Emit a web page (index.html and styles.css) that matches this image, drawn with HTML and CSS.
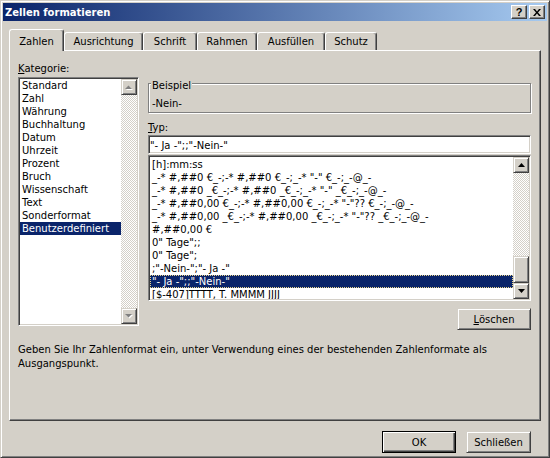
FILE: index.html
```html
<!DOCTYPE html>
<html lang="de">
<head>
    <meta charset="UTF-8">
    <title>Zellen formatieren</title>
    <link rel="stylesheet" href="styles.css">
</head>
<body>
    <div class="window">
        <div class="titlebar">
            <span class="title">Zellen formatieren</span>
            <div class="caption">
                <span class="cap-btn help">?</span>
                <span class="cap-btn">
                    <svg width="8" height="7" viewBox="0 0 8 7"><path d="M0 0h2l2 2.5L6 0h2L5 3.5 8 7H6L4 4.5 2 7H0l3-3.5z" fill="#000"/></svg>
                </span>
            </div>
        </div>

        <div class="tabs">
            <div class="tab active w-zahlen">Zahlen</div>
            <div class="tab w-ausr">Ausrichtung</div>
            <div class="tab w-schrift">Schrift</div>
            <div class="tab w-rahmen">Rahmen</div>
            <div class="tab w-ausf">Ausfüllen</div>
            <div class="tab w-schutz">Schutz</div>
        </div>

        <div class="panel">
            <div class="cols">
                <div class="left">
                    <div class="label"><u>K</u>ategorie:</div>
                    <div class="sunken catlist">
                        <div class="items">
                            <div class="item">Standard</div>
                            <div class="item">Zahl</div>
                            <div class="item">Währung</div>
                            <div class="item">Buchhaltung</div>
                            <div class="item">Datum</div>
                            <div class="item">Uhrzeit</div>
                            <div class="item">Prozent</div>
                            <div class="item">Bruch</div>
                            <div class="item">Wissenschaft</div>
                            <div class="item">Text</div>
                            <div class="item">Sonderformat</div>
                            <div class="item sel">Benutzerdefiniert</div>
                        </div>
                        <div class="vscroll">
                            <div class="raised arrow">
                                <svg width="8" height="5" viewBox="0 0 8 5"><path d="M1 5h7L4.5 1.5z" fill="#fff"/><path d="M0 4h7L3.5 0.5z" fill="#808080"/></svg>
                            </div>
                            <div class="track"></div>
                            <div class="raised arrow">
                                <svg width="8" height="5" viewBox="0 0 8 5"><path d="M1 1h7L4.5 4.5z" fill="#fff"/><path d="M0 0h7L3.5 3.5z" fill="#808080"/></svg>
                            </div>
                        </div>
                    </div>
                </div>

                <div class="right">
                    <div class="group">
                        <div class="legend">Beispiel</div>
                        <div class="sample">-Nein-</div>
                    </div>

                    <div class="label typ"><u>T</u>yp:</div>
                    <div class="sunken input">"- Ja -";;"-Nein-"</div>

                    <div class="sunken fmtlist">
                        <div class="rows">
                            <div class="row">[h]:mm:ss</div>
                            <div class="row">_-* #,##0 €_-;-* #,##0 €_-;_-* "-" €_-;_-@_-</div>
                            <div class="row">_-* #,##0 _€_-;-* #,##0 _€_-;_-* "-" _€_-;_-@_-</div>
                            <div class="row">_-* #,##0,00 €_-;-* #,##0,00 €_-;_-* "-"?? €_-;_-@_-</div>
                            <div class="row">_-* #,##0,00 _€_-;-* #,##0,00 _€_-;_-* "-"?? _€_-;_-@_-</div>
                            <div class="row">#,##0,00 €</div>
                            <div class="row">0" Tage";;</div>
                            <div class="row">0" Tage";</div>
                            <div class="row">;"-Nein-";"- Ja -"</div>
                            <div class="row sel">"- Ja -";;"-Nein-"</div>
                            <div class="row">[$-407]TTTT, T. MMMM JJJJ</div>
                        </div>
                        <div class="vscroll">
                            <div class="raised arrow">
                                <svg width="7" height="4" viewBox="0 0 7 4"><path d="M0 4h7L3.5 0z" fill="#000"/></svg>
                            </div>
                            <div class="track"></div>
                            <div class="raised thumb"></div>
                            <div class="raised arrow">
                                <svg width="7" height="4" viewBox="0 0 7 4"><path d="M0 0h7L3.5 4z" fill="#000"/></svg>
                            </div>
                        </div>
                    </div>

                    <div class="btn-row">
                        <div class="raised btn w-loeschen"><span><u>L</u>öschen</span></div>
                    </div>
                </div>
            </div>

            <p class="desc">Geben Sie Ihr Zahlenformat ein, unter Verwendung eines der bestehenden Zahlenformate als<br>Ausgangspunkt.</p>
        </div>

        <div class="footer">
            <div class="btn default w-ok">OK</div>
            <div class="raised btn w-schliessen">Schließen</div>
        </div>
    </div>
</body>
</html>
```

FILE: styles.css
```css
*{
    margin: 0;
    padding: 0;
    box-sizing: border-box;
}
body{
    background: #d4d0c8;
    font: 10px/13px "DejaVu Sans", Verdana, sans-serif;
    color: #000;
}
u{
    text-decoration: underline;
    text-underline-offset: 1px;
}

/* window frame */
.window{
    width: 550px;
    height: 458px;
    background: #d4d0c8;
    border: 1px solid;
    border-color: #d4d0c8 #404040 #404040 #d4d0c8;
    box-shadow: inset 1px 1px #fff, inset -1px -1px #808080;
    padding: 2px;
}
.titlebar{
    height: 18px;
    display: flex;
    align-items: center;
    justify-content: space-between;
    padding: 0 2px;
    background: linear-gradient(to right, #0a246a, #a6caf0);
}
.title{
    color: #fff;
    font-weight: bold;
    font-size: 10px;
}
.caption{
    display: flex;
    gap: 2px;
}
.cap-btn{
    width: 16px;
    height: 14px;
    display: flex;
    align-items: center;
    justify-content: center;
    background: #d4d0c8;
    border: 1px solid;
    border-color: #fff #404040 #404040 #fff;
    box-shadow: inset -1px -1px #808080;
}
.help{
    font: bold 11px/12px "Liberation Sans", Arial, sans-serif;
}

/* 3d helpers */
.raised{
    background: #d4d0c8;
    border: 1px solid;
    border-color: #d4d0c8 #404040 #404040 #d4d0c8;
    box-shadow: inset 1px 1px #fff, inset -1px -1px #808080;
}
.sunken{
    background: #fff;
    border: 1px solid;
    border-color: #808080 #fff #fff #808080;
    box-shadow: inset 1px 1px #404040, inset -1px -1px #d4d0c8;
    padding: 1px;
}

/* tabs */
.tabs{
    display: flex;
    align-items: flex-start;
    margin-top: 8px;
    padding-left: 6px;
    height: 22px;
}
.tab{
    margin-top: 3px;
    height: 18px;
    padding-top: 2px;
    text-align: center;
    white-space: nowrap;
    border: 1px solid;
    border-bottom: 0;
    border-color: #fff #404040 #fff #fff;
    border-radius: 3px 3px 0 0;
    box-shadow: inset -1px 0 #808080;
}
.tab.active{
    margin-top: 0;
    height: 22px;
    padding-top: 5px;
    position: relative;
    z-index: 1;
    background: #d4d0c8;
}
.w-zahlen{ width: 55px; }
.w-ausr{ width: 79px; }
.w-schrift{ width: 54px; }
.w-rahmen{ width: 60px; }
.w-ausf{ width: 68px; }
.w-schutz{ width: 52px; }

/* panel */
.panel{
    margin: -1px 0 0 6px;
    width: 532px;
    height: 371px;
    border: 1px solid;
    border-color: #fff #404040 #404040 #fff;
    box-shadow: inset -1px -1px #808080;
    padding: 11px 8px 0 8px;
}
.cols{
    display: flex;
    gap: 9px;
}
.left{
    width: 121px;
}
.label{
    height: 13px;
}

.catlist{
    margin-top: 2px;
    height: 249px;
    display: flex;
}
.items{
    flex: 1;
}
.item{
    height: 13px;
    padding-left: 2px;
    white-space: nowrap;
}
.item.sel{
    background: #0a246a;
    color: #fff;
}

.vscroll{
    width: 16px;
    display: flex;
    flex-direction: column;
}
.arrow{
    height: 16px;
    display: flex;
    align-items: center;
    justify-content: center;
}
.track{
    flex: 1;
    background: repeating-conic-gradient(#fff 0 25%, #d4d0c8 0 50%) 0 0 / 2px 2px;
}
.thumb{
    height: 27px;
}

/* right side */
.right{
    width: 383px;
}
.group{
    margin-top: 21px;
    height: 30px;
    border: 1px solid #808080;
    box-shadow: inset 1px 1px #fff, 1px 1px #fff;
    padding-left: 2px;
}
.legend{
    width: max-content;
    margin-top: -5px;
    padding: 0 1px;
    background: #d4d0c8;
}
.sample{
    margin-top: 5px;
    padding-left: 1px;
}
.typ{
    margin-top: 8px;
}
.input{
    margin-top: 1px;
    height: 19px;
    padding: 3px 1px 0 1px;
    white-space: nowrap;
}
.fmtlist{
    margin-top: 1px;
    height: 146px;
    display: flex;
}
.rows{
    flex: 1;
    padding-top: 1px;
    overflow: hidden;
}
.row{
    height: 13px;
    padding-left: 2px;
    white-space: nowrap;
}
.row.sel{
    background: #0a246a;
    color: #fff;
    outline: 1px dotted #e8d48a;
    outline-offset: -1px;
}

.btn-row{
    display: flex;
    justify-content: flex-end;
    margin-top: 7px;
}
.btn{
    height: 22px;
    display: flex;
    align-items: center;
    justify-content: center;
}
.w-loeschen{ width: 74px; }
.w-ok{ width: 74px; }
.w-schliessen{ width: 65px; }
.btn.default{
    background: #d4d0c8;
    border: 1px solid #000;
    box-shadow: inset 1px 1px #fff, inset -1px -1px #404040, inset -2px -2px #808080;
}

.desc{
    margin-top: 13px;
    line-height: 14px;
    white-space: nowrap;
}

.footer{
    display: flex;
    justify-content: flex-end;
    gap: 10px;
    margin-top: 10px;
    padding-right: 16px;
}
```
